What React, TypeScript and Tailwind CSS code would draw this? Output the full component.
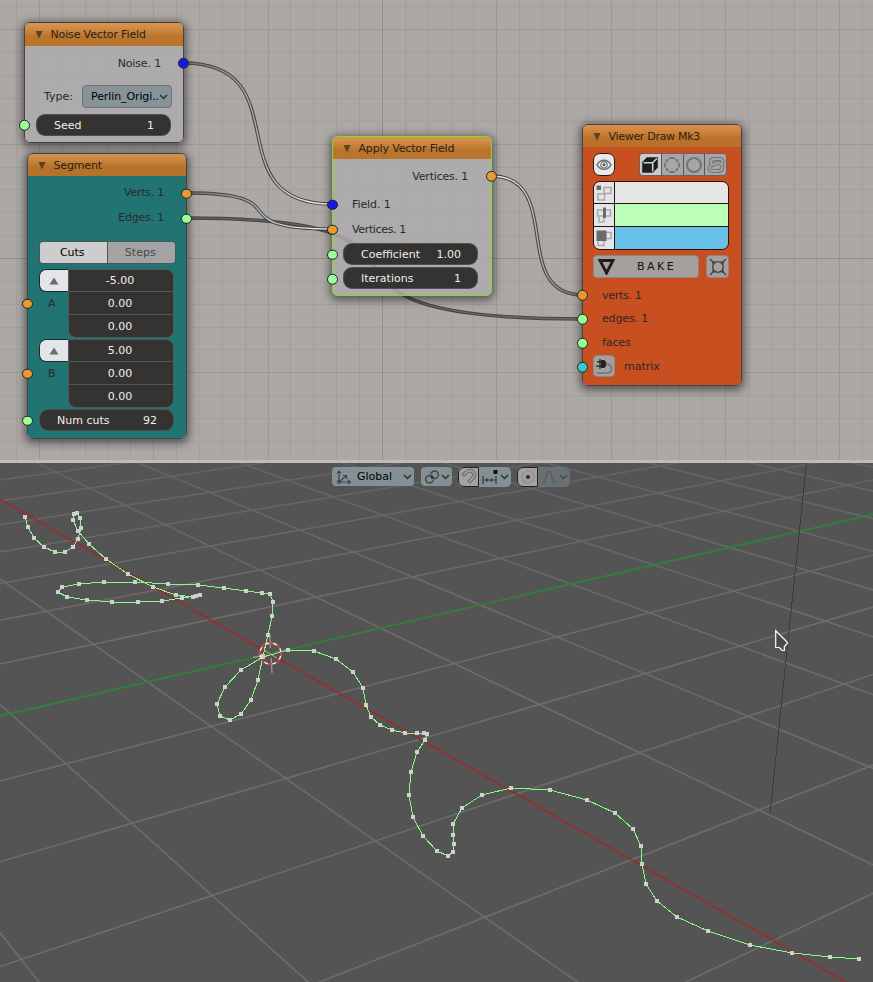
import React from "react";

/* ---------- shared bits ---------- */

type SocketKind = "vector" | "value" | "field" | "matrix";

const SOCKET_FILL: Record<SocketKind, string> = {
  vector: "bg-[#e59a33]",
  value: "bg-[#99ff99]",
  field: "bg-[#1818e6]",
  matrix: "bg-[#33cccc]",
};

function Socket({ kind, side, top }: { kind: SocketKind; side: "left" | "right"; top: number }) {
  return (
    <span
      className={`absolute size-[10.5px] -translate-y-1/2 rounded-full border border-[#222222] ${SOCKET_FILL[kind]} ${
        side === "left" ? "-left-[5.7px]" : "-right-[5.500px]"
      }`}
      style={{ top }}
    />
  );
}

function Node({
  title,
  place,
  body,
  border = "border-[#444444]",
  headerHeight = "h-[22px]",
  titleTracking = "-tracking-[0.15px]",
  children,
}: {
  title: string;
  place: string;
  body: string;
  border?: string;
  headerHeight?: string;
  titleTracking?: string;
  children: React.ReactNode;
}) {
  return (
    <section
      className={`absolute rounded-[6px] border shadow-[0_2px_9px_2px_rgba(0,0,0,0.5)] ${border} ${place}`}
    >
      <div className={`flex h-full flex-col overflow-hidden rounded-[5px] ${body}`}>
        <header
          className={`flex shrink-0 items-center bg-linear-to-b from-[#d8904a]/97 from-10% via-[#c57c31]/97 via-45% to-[#b97229]/97 to-60% pl-[10px] ${headerHeight}`}
        >
          <svg width="8" height="9" viewBox="0 0 8 9" className="shrink-0">
            <path d="M0.500 1h7L4 8.500z" fill="#5e4020" />
          </svg>
          <h2 className={`ml-[7.5px] text-[#2b2116] ${titleTracking}`}>{title}</h2>
        </header>
        {children}
      </div>
    </section>
  );
}

function NumField({ label, value }: { label: string; value: string }) {
  return (
    <div className="flex h-[22px] w-[135px] items-center justify-between rounded-[9px] border border-[#5b5b5b]/70 bg-[#353331] pr-[16px] pl-[17px] text-[#efefef]">
      <span>{label}</span>
      <span>{value}</span>
    </div>
  );
}

function VectorField({ name, values }: { name: string; values: string[] }) {
  return (
    <div className="ml-[11px] flex h-[69px] w-[135px]">
      <div className="flex w-[29px] flex-col">
        <span className="flex h-[23px] items-center justify-center rounded-l-[7px] border border-r-0 border-[#182c2b] bg-[#e3e5e8]">
          <svg width="10" height="8" viewBox="0 0 10 8">
            <path d="M0.500 7.500L5 0.500l4.500 7z" fill="#6b6b6b" />
          </svg>
        </span>
        <span className="flex h-[23px] items-center pl-[9px]">{name}</span>
      </div>
      <div className="grid w-[106px] grid-rows-[22px_23px_22px] divide-y divide-[#4c5a58] overflow-hidden rounded-r-[8px] rounded-bl-[8px] border border-[#4c5a58] bg-[#353331] text-[#efefef]">
        {values.map((v, i) => (
          <span key={i} className="flex items-center justify-center pr-[2px]">
            {v}
          </span>
        ))}
      </div>
    </div>
  );
}

function Chevron() {
  return (
    <svg width="9" height="6" viewBox="0 0 9 6" className="shrink-0">
      <path d="M1 1l3.500 3.500L8 1" fill="none" stroke="#2b3032" strokeWidth="1.500" />
    </svg>
  );
}

/* ---------- node editor ---------- */

const WIRES = [
  { id: "a", d: "M187 218C500 218 245 319 583 319", from: "#5c5c5c", to: "#6a6a6a", x1: 187, x2: 583 },
  { id: "b", d: "M183 63C302 63 213 204 332 204", from: "#6c6c6c", to: "#f0f0f0", x1: 183, x2: 332 },
  { id: "c", d: "M187 193C303 193 216 229 332 229", from: "#666666", to: "#ffffff", x1: 187, x2: 332 },
  { id: "d", d: "M491 176C565 176 509 295 583 295", from: "#ffffff", to: "#666666", x1: 491, x2: 583 },
];

function Backdrop() {
  const cols = Array.from({ length: 38 }, (_, i) => i);
  const rows = Array.from({ length: 21 }, (_, i) => i);
  const tone = (n: number) => (n === 0 ? "#918d8c" : n % 5 === 0 ? "#9c9897" : "#a29e9d");
  return (
    <svg className="absolute inset-0" width="873" height="460">
      {cols.map((i) => (
        <rect key={i} x={Math.round(381.9 + (i - 16) * 22.87)} width="1" height="460" fill={tone(i - 16)} />
      ))}
      {rows.map((i) => (
        <rect key={i} y={Math.round(258 + (i - 11) * 22.87)} height="1" width="873" fill={tone(i - 11)} />
      ))}
      {WIRES.map((w) => (
        <g key={w.id} fill="none">
          <linearGradient id={w.id} gradientUnits="userSpaceOnUse" x1={w.x1} x2={w.x2} y1="0" y2="0">
            <stop offset="0" stopColor={w.from} />
            <stop offset="1" stopColor={w.to} />
          </linearGradient>
          <path d={w.d} stroke="#444444" strokeWidth="3.500" />
          <path d={w.d} stroke={`url(#${w.id})`} strokeWidth="1.400" />
        </g>
      ))}
    </svg>
  );
}

function NoiseNode() {
  return (
    <Node
      title="Noise Vector Field"
      place="left-[24px] top-[22px] w-[160px] h-[121px]"
      body="bg-[#adacad]/85"
      headerHeight="h-[23px]"
    >
      <div className="flex h-[34px] items-center justify-end pr-[22px] -tracking-[0.15px]">Noise. 1</div>
      <div className="flex h-[33px] items-center pl-[19px]">
        <span className="w-[38px]">Type:</span>
        <span className="flex h-[23px] w-[90px] items-center justify-between rounded-[4px] border border-[#69747a] bg-[#879399] pr-[3px] pl-[8px] text-black">
          <span className="-tracking-[0.1px]">Perlin_Origi..</span>
          <Chevron />
        </span>
      </div>
      <div className="flex h-6 items-center pl-[11px]">
        <NumField label="Seed" value="1" />
      </div>
      <Socket kind="field" side="right" top={40} />
      <Socket kind="value" side="left" top={102} />
    </Node>
  );
}

function SegmentNode() {
  return (
    <Node title="Segment" place="left-[27px] top-[153px] w-[160px] h-[286px]" body="bg-[#1c7371]/97">
      <div className="mt-1 flex h-[25px] items-center justify-end pr-[22px] -tracking-[0.25px]">Verts. 1</div>
      <div className="flex h-[25px] items-center justify-end pr-[22px] -tracking-[0.2px]">Edges. 1</div>
      <div className="mt-[11px] ml-[11px] grid h-[23px] w-[137px] shrink-0 grid-cols-2 overflow-hidden rounded-[4px] border border-[#4b5756]">
        <span className="flex items-center justify-center border-r border-[#4b5756] bg-[#cdcdcd] pr-[2px] text-black">Cuts</span>
        <span className="flex items-center justify-center bg-[#a3a3a3] pr-[2px] text-[#4a4a4a]">Steps</span>
      </div>
      <div className="mt-[5px] flex flex-col gap-px">
        <VectorField name="A" values={["-5.00", "0.00", "0.00"]} />
        <VectorField name="B" values={["5.00", "0.00", "0.00"]} />
        <div className="ml-[11px]">
          <NumField label="Num cuts" value="92" />
        </div>
      </div>
      <Socket kind="vector" side="right" top={39.5} />
      <Socket kind="value" side="right" top={64.5} />
      <Socket kind="vector" side="left" top={149.5} />
      <Socket kind="vector" side="left" top={219.5} />
      <Socket kind="value" side="left" top={266.5} />
    </Node>
  );
}

function ApplyNode() {
  return (
    <Node
      title="Apply Vector Field"
      place="left-[332px] top-[136px] w-[160px] h-[160px]"
      body="bg-[#adacad]/85"
      border="border-[#7ce01c]"
    >
      <div className="mt-[5px] flex h-6 items-center justify-end pr-[23px] -tracking-[0.2px]">Vertices. 1</div>
      <div className="mt-[4px] flex h-[25px] items-center pl-[19px] -tracking-[0.1px]">Field. 1</div>
      <div className="flex h-[25px] items-center pl-[19px] -tracking-[0.35px]">Vertices. 1</div>
      <div className="mt-px flex flex-col gap-[2px] pl-[10px]">
        <NumField label="Coefficient" value="1.00" />
        <NumField label="Iterations" value="1" />
      </div>
      <Socket kind="vector" side="right" top={39} />
      <Socket kind="field" side="left" top={67.5} />
      <Socket kind="vector" side="left" top={92.5} />
      <Socket kind="value" side="left" top={117.5} />
      <Socket kind="value" side="left" top={142} />
    </Node>
  );
}

// Link-shaped S: outlined by a wide stroke with a narrower one on top.
const KNOT = "M15 7.500C17 4 14 3 11.500 3H7C2.500 3 3 8.500 6.500 8.500C9 8.500 9.500 5.500 12 7C16.500 9 16.500 15 11 15H6C1.500 15 1.500 11 4 10";

const DISPLAY_ICONS = [
  <svg key="cube" width="18" height="18" viewBox="0 0 18 18">
    <path d="M1.200 6.200L5.800 1.200H16.800V11.500L12 16.800H1.200z" fill="#1e1e1e" />
    <path d="M2.500 6.800h9L16 2.500M11.700 7v8.500" fill="none" stroke="#cdcdcd" strokeWidth="1.600" />
  </svg>,
  <svg key="vert" width="18" height="18" viewBox="0 0 18 18" fill="none" stroke="#747474" strokeWidth="1.800">
    <path d="M6.500 2h5M6.500 16h5M2 6.500v5M16 6.500v5M3.800 6V4.500L5.500 3.200M14.200 6V4.500L12.500 3.200M3.800 12v1.500L5.500 14.800M14.200 12v1.500L12.500 14.800" />
  </svg>,
  <svg key="ring" width="18" height="18" viewBox="0 0 18 18" fill="none" stroke="#747474" strokeWidth="2">
    <circle cx="9" cy="9" r="7" />
  </svg>,
  <svg key="knot" width="18" height="18" viewBox="0 0 18 18" fill="none">
    <path d={KNOT} stroke="#747474" strokeWidth="4" strokeLinecap="round" />
    <path d={KNOT} stroke="#a6a6a6" strokeWidth="1.800" strokeLinecap="round" />
  </svg>,
];

const COLOR_ROWS = [
  {
    swatch: "bg-[#e6e6e6]",
    icon: (
      <>
        <path d="M9 3.500h7v6H9zM3 10h6.500v6H3zM9 9.500V4" fill="none" stroke="#a8a9ab" strokeWidth="1.500" />
        <path d="M1.500 1.500h4.500v4.500h-4.500z" fill="#6a6a6a" />
      </>
    ),
  },
  {
    swatch: "bg-[#bcffb9]",
    icon: (
      <>
        <path d="M8 4H2.500v6H8M11 4h4.500v6H11M4 11v5h5v-4" fill="none" stroke="#a8a9ab" strokeWidth="1.500" />
        <path d="M8 1.500h3v10.500H8z" fill="#6a6a6a" />
      </>
    ),
  },
  {
    swatch: "bg-[#69c0e8]",
    icon: (
      <>
        <path d="M11.500 3.500h4.500v6h-5M3 12v4.500h6V12" fill="none" stroke="#a8a9ab" strokeWidth="1.500" />
        <path d="M1.500 1.500h10V12h-10z" fill="#6a6a6a" />
      </>
    ),
  },
];

function ViewerNode() {
  return (
    <Node
      title="Viewer Draw Mk3"
      place="left-[582px] top-[124px] w-[160px] h-[262px]"
      body="bg-[#c84e1d]/98"
      titleTracking="-tracking-[0.3px]"
    >
      <div className="mt-[6px] flex h-[23px] shrink-0 justify-between pr-[14px] pl-[10px]">
        <span className="flex w-[22px] items-center justify-center rounded-[7px] border border-[#2a1a12] bg-[#e8e8e8]">
          <svg width="16" height="14" viewBox="0 0 16 14" fill="none" stroke="#707070" strokeWidth="1.400">
            <path d="M1 6.800c3.500-6 10.500-6 14 0-3.500 6-10.500 6-14 0z" />
            <circle cx="8" cy="6.800" r="3.200" strokeWidth="1.100" />
            <circle cx="8" cy="6.800" r="1.500" fill="#5a5a5a" stroke="none" />
          </svg>
        </span>
        <span className="flex w-[88px] divide-x divide-[#5f5550] overflow-hidden rounded-[4px] border border-[#6f6159]">
          {DISPLAY_ICONS.map((icon, i) => (
            <span key={i} className={`flex flex-1 items-center justify-center ${i === 0 ? "bg-[#cbcbcb]" : "bg-[#a6a6a6]"}`}>
              {icon}
            </span>
          ))}
        </span>
      </div>
      <div className="mt-[5px] ml-[10px] grid h-[69px] w-[136px] shrink-0 grid-rows-3 divide-y divide-[#1f1410] overflow-hidden rounded-[7px] border border-[#1f1410]">
        {COLOR_ROWS.map((row, i) => (
          <div key={i} className="flex">
            <span className="flex w-[21px] items-center justify-center border-r border-[#1f1410] bg-[#e4e5e8]">
              <svg width="18" height="18" viewBox="0 0 18 18">
                {row.icon}
              </svg>
            </span>
            <span className={`flex-1 ${row.swatch}`} />
          </div>
        ))}
      </div>
      <div className="mt-[5px] ml-[10px] flex h-[23px] w-[136px] shrink-0 gap-[7px]">
        <span className="relative flex w-[106px] items-center justify-center rounded-[4px] border border-[#8e8580] bg-[#a5a09d] pl-[21px] tracking-[2.500px] text-[#111111]">
          <svg className="absolute left-[4px]" width="17" height="17" viewBox="0 0 17 17">
            <path d="M2 2.500h13L8.500 15z" fill="none" stroke="#1c1c1c" strokeWidth="2.800" />
          </svg>
          BAKE
        </span>
        <span className="flex w-[23px] items-center justify-center rounded-[4px] border border-[#8e8580] bg-[#a5a09d]">
          <svg width="18" height="18" viewBox="0 0 18 18" fill="none" stroke="#3f3d3c" strokeWidth="1.300">
            <circle cx="9" cy="9" r="5.300" />
            <path d="M1 1l4 4M17 1l-4 4M1 17l4-4M17 17l-4-4" />
            <path d="M3.800 6.500V4H6.300M11.700 4h2.500V6.500M3.800 11.500v2.500H6.300M14.200 11.500v2.500H11.700" strokeWidth="0.900" />
          </svg>
        </span>
      </div>
      <div className="mt-[5px] flex h-6 items-center pl-[19px] -tracking-[0.3px]">verts. 1</div>
      <div className="flex h-[23px] items-center pl-[19px] -tracking-[0.15px]">edges. 1</div>
      <div className="flex h-6 items-center pl-[19px] -tracking-[0.1px]">faces</div>
      <div className="flex h-6 items-center gap-[9px] pl-[10px]">
        <span className="flex size-[22px] items-center justify-center rounded-[4px] border border-[#8e8580] bg-[#a5a09d]">
          <svg width="18" height="18" viewBox="0 0 18 18">
            <path d="M6 3H8c4.500 0 4.500 8 0 8H6z" fill="#222222" />
            <path d="M2 4.800h4M1 9.200h5M5 2v10" stroke="#222222" strokeWidth="1.200" />
            <path d="M11.500 7.500c6-1 7 8.500 1 8.500H2" fill="none" stroke="#747170" strokeWidth="1.600" />
          </svg>
        </span>
        matrix
      </div>
      <Socket kind="vector" side="left" top={170} />
      <Socket kind="value" side="left" top={194} />
      <Socket kind="value" side="left" top={218} />
      <Socket kind="matrix" side="left" top={242} />
    </Node>
  );
}

/* ---------- 3D viewport ---------- */

// Floor grid crossings [cross line, axis line, screen x, screen y] that calibrate the camera.
const CALIBRATION = [
  [-1, 1, 211, 726], [-1, 2, 285.7, 778.7], [-1, 3, 375.7, 840.7], [-1, 4, 484.3, 917],
  [-2, 1, 66.7, 763.7], [-2, 2, 132.3, 823.3], [-2, 3, 212.3, 895.7], [-3, 3, 20.7, 959.7],
  [1, 4, 758.3, 809.7], [2, 2, 645.7, 673.7], [2, 3, 747.7, 716.3], [3, 1, 650, 613],
  [3, 2, 740, 646], [3, 3, 844.3, 684.3], [4, 1, 733.3, 591.3], [4, 2, 825.3, 621],
  [4, -1, 582.3, 541], [5, -1, 655, 525.7], [6, -1, 723.3, 511], [-1, -1, 93.3, 644.3],
  [1, -1, 316.7, 596.7], [4, 0, 652, 565], [6, 0, 799, 530.7], [-1, 0, 147, 682.5],
];

function solveCamera(): number[] {
  const m = Array.from({ length: 8 }, () => new Array<number>(9).fill(0));
  for (const [u, v, px, py] of CALIBRATION) {
    const x = px / 1000;
    const y = py / 1000;
    for (const r of [
      [u, v, 1, 0, 0, 0, -u * x, -v * x, x],
      [0, 0, 0, u, v, 1, -u * y, -v * y, y],
    ]) {
      for (let i = 0; i < 8; i++) for (let j = 0; j < 9; j++) m[i][j] += r[i] * r[j];
    }
  }
  for (let c = 0; c < 8; c++) {
    let p = c;
    for (let r = c + 1; r < 8; r++) if (Math.abs(m[r][c]) > Math.abs(m[p][c])) p = r;
    [m[c], m[p]] = [m[p], m[c]];
    for (let r = 0; r < 8; r++) {
      if (r === c) continue;
      const f = m[r][c] / m[c][c];
      for (let k = c; k < 9; k++) m[r][k] -= f * m[c][k];
    }
  }
  return m.map((row, i) => row[8] / row[i]);
}

const CAM = solveCamera();

function floorLine(u0: number, v0: number, u1: number, v1: number) {
  const depth = (u: number, v: number) => CAM[6] * u + CAM[7] * v + 1;
  const near = 0.12;
  let [a, b] = [0, 1];
  const d0 = depth(u0, v0);
  const d1 = depth(u1, v1);
  if (d0 < near && d1 < near) return null;
  if (d0 < near) a = (near - d0) / (d1 - d0);
  if (d1 < near) b = (near - d0) / (d1 - d0);
  const at = (t: number) => {
    const u = u0 + (u1 - u0) * t;
    const v = v0 + (v1 - v0) * t;
    const w = depth(u, v);
    return [((CAM[0] * u + CAM[1] * v + CAM[2]) / w) * 1000, ((CAM[3] * u + CAM[4] * v + CAM[5]) / w) * 1000];
  };
  return [...at(a), ...at(b)];
}

const RANGE = Array.from({ length: 49 }, (_, i) => i - 24);

const CURVE = [
  [25, 517], [28, 527], [34, 538], [44, 547], [55, 552], [65, 552], [73, 547], [78, 539], [81, 528], [80, 518],
  [77, 513], [74, 514], [73, 520], [78, 531], [89, 544], [106, 559], [128, 574], [153, 587], [176, 595], [193, 597],
  [200, 595], [196, 596], [182, 598], [162, 601], [138, 602], [112, 602], [87, 600], [67, 597], [58, 592], [62, 587],
  [79, 584], [104, 582], [135, 582], [168, 584], [198, 585], [224, 588], [246, 591], [262, 593], [270, 594], [273, 602],
  [272, 616], [268, 635], [263, 656], [258, 680], [251, 700], [241, 714], [230, 720], [220, 716], [217, 704], [225, 687],
  [241, 670], [263, 657], [288, 650], [314, 651], [336, 659], [353, 672], [363, 688], [366, 705], [371, 717], [380, 725],
  [392, 730], [405, 733], [417, 733], [424, 733], [427, 734], [425, 740], [417, 752], [411, 772], [409, 795], [413, 817],
  [423, 836], [437, 851], [448, 856], [453, 852], [454, 844], [453, 835], [453, 824], [462, 808], [482, 795], [511, 788],
  [550, 790], [587, 800], [615, 813], [633, 829], [641, 846], [642, 864], [646, 884], [657, 901], [677, 917], [708, 931],
  [750, 945], [792, 953], [830, 957], [859, 959],
];

function Scene() {
  const lines = RANGE.filter((n) => n !== 0).flatMap((n) => [floorLine(n, -24, n, 24), floorLine(-24, n, 24, n)]);
  return (
    <svg className="absolute inset-0" width="873" height="519" viewBox="0 463 873 519">
      <linearGradient id="floor" gradientUnits="userSpaceOnUse" x1="0" x2="0" y1="463" y2="620">
        <stop offset="0" stopColor="#636363" />
        <stop offset="1" stopColor="#6d6d6d" />
      </linearGradient>
      <g stroke="url(#floor)" strokeWidth="1.500">
        {lines.map((l, i) => l && <line key={i} x1={l[0]} y1={l[1]} x2={l[2]} y2={l[3]} />)}
      </g>
      <path d="M0 716L873 514.300" stroke="#31803a" strokeWidth="1.800" />
      <path d="M0 499.300L270 653.700L847 982.500" fill="none" stroke="#962e2e" strokeWidth="1.800" />
      <path d="M806.500 463L770 814" stroke="#3c3c3c" strokeWidth="1" shapeRendering="crispEdges" />
      <polyline
        points={CURVE.map((p) => p.join(",")).join(" ")}
        fill="none"
        stroke="#80ff80"
        strokeWidth="1"
        shapeRendering="crispEdges"
      />
      {CURVE.map(([x, y], i) => (
        <rect key={i} x={x - 2} y={y - 2} width="4" height="4" fill="#cfcfcf" />
      ))}
      <g fill="none">
        <path
          d="M269.800 634l.5 14M271.200 658l.8 15M253 657.500l12-2.500M277 652.500l13-2.500M264 650l13 8"
          stroke="#bdbdbd"
          strokeOpacity="0.700"
          strokeWidth="1.200"
        />
        <circle cx="270.500" cy="653.500" r="10.500" stroke="#f2f2f2" strokeWidth="1.300" />
        <circle
          cx="270.500"
          cy="653.500"
          r="10.500"
          stroke="#ee1111"
          strokeWidth="1.500"
          strokeDasharray="4.500 3.747"
          strokeDashoffset="2"
        />
      </g>
      <path d="M775.700 630.800v16.700h3.600l3 3h2v-4l3-3v-1.200z" fill="#4a4a4a" stroke="#ffffff" strokeWidth="1.200" />
    </svg>
  );
}

function Toolbar() {
  return (
    <div className="relative flex h-[19px] items-center pl-[332px] text-black">
      <div className="flex h-[19px] w-[82px] items-center justify-between rounded-[4px] bg-[#849096] pr-[2px] pl-[4px]">
        <svg width="16" height="16" viewBox="0 0 16 16" fill="none" stroke="#3d4447" strokeWidth="1.200">
          <path d="M3 13V2M1 4.500L3 2l2 2.500M3 13h11M12 11l2.500 2-2.500 2M3 13l7-6M7 6.500h3.500V10" />
          <circle cx="3" cy="13" r="1.500" />
        </svg>
        <span className="mr-[6px]">Global</span>
        <Chevron />
      </div>
      <div className="ml-[7px] flex h-[19px] w-[31px] items-center justify-between rounded-[4px] bg-[#849096] pr-[2px] pl-[3px]">
        <svg width="16" height="16" viewBox="0 0 16 16" fill="none" stroke="#3d4447" strokeWidth="1.400">
          <path d="M9.200 10.500A3.800 3.800 0 1 1 6 6.500L8 7.500M6.800 5.500A3.800 3.800 0 1 1 10 9.500L8 8.500" />
          <circle cx="8" cy="8" r="1.500" fill="#262a2c" stroke="none" />
        </svg>
        <Chevron />
      </div>
      <div className="ml-[6px] flex h-5 w-[53px] overflow-hidden rounded-[5px] bg-[#849096]">
        <span className="flex w-[21px] items-center justify-center rounded-l-[6px] border border-[#222222] bg-[#a2a2a2]">
          <svg width="17" height="17" viewBox="0 0 17 17" fill="none">
            <path d="M2.500 7.500L6.500 4.200C12 0 17 6.500 12.500 10.500L8.500 14.200" stroke="#707070" strokeWidth="4" />
            <path d="M3.500 6.700L6.500 4.200C12 0 17 6.500 12.500 10.500L9.300 13.500" stroke="#a2a2a2" strokeWidth="1.700" />
          </svg>
        </span>
        <span className="flex flex-1 items-center justify-between pr-[2px] pl-[3px]">
          <svg width="17" height="16" viewBox="0 0 17 16" fill="none" stroke="#33393c" strokeWidth="1.200">
            <path d="M1 7v8M14 7v8M5 9v4M9.500 9v4M1 11h13" />
            <path d="M11.500 1h4v4h-4z" fill="#111111" stroke="none" />
          </svg>
          <Chevron />
        </span>
      </div>
      <div className="ml-[6px] flex h-5 w-[53px] overflow-hidden rounded-[5px] bg-[#697174]">
        <span className="flex w-[21px] items-center justify-center rounded-l-[6px] border border-[#222222] bg-[#a2a2a2]">
          <svg width="16" height="16" viewBox="0 0 16 16">
            <circle cx="8" cy="8" r="6" fill="none" stroke="#8d8d8d" strokeWidth="1.200" />
            <circle cx="8" cy="8" r="2" fill="#2c2c2c" />
          </svg>
        </span>
        <span className="flex flex-1 items-center justify-between pr-[2px] pl-[3px] opacity-60">
          <svg width="16" height="16" viewBox="0 0 16 16" fill="none" stroke="#44494c" strokeWidth="1.200">
            <path d="M1 14c5 0 4-12 7-12s2 12 7 12" />
          </svg>
          <Chevron />
        </span>
      </div>
    </div>
  );
}

export default function App() {
  return (
    <main className="flex h-[982px] w-[873px] flex-col overflow-hidden font-['DejaVu_Sans',sans-serif] text-[11px] leading-none whitespace-nowrap text-[#2a2a2a]">
      <div className="relative h-[460px] shrink-0 overflow-hidden bg-[#aca8a6]">
        <Backdrop />
        <NoiseNode />
        <SegmentNode />
        <ApplyNode />
        <ViewerNode />
      </div>
      <div className="h-[3px] shrink-0 bg-[#bcbcbc]" />
      <div className="relative flex-1 overflow-hidden bg-[#545454] pt-[4px]">
        <Scene />
        <Toolbar />
      </div>
    </main>
  );
}
